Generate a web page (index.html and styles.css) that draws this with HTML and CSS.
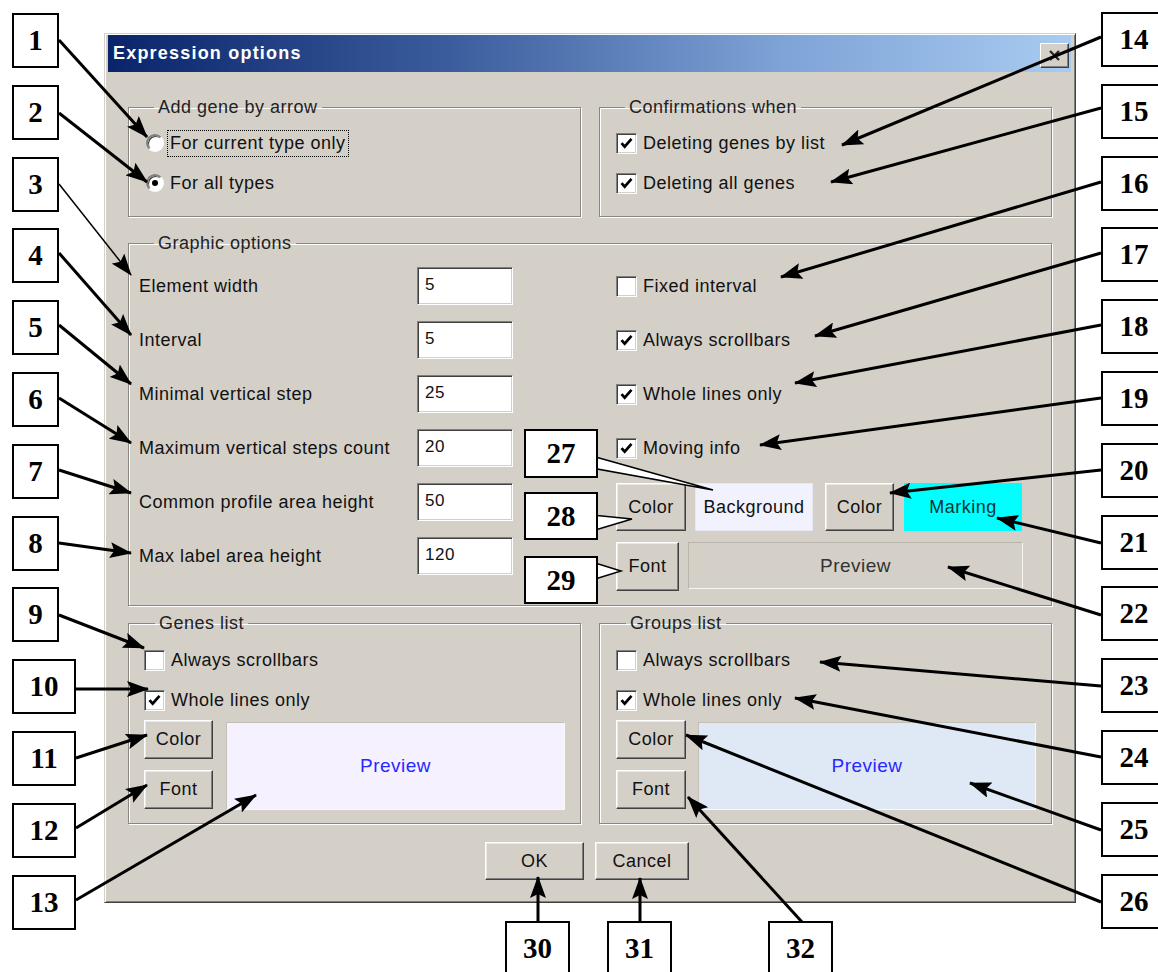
FILE: index.html
```html
<!DOCTYPE html>
<html>
<head>
<meta charset="utf-8">
<title>Expression options</title>
<link rel="stylesheet" href="styles.css">
</head>
<body>
<div class="figure">
  <div class="col-left">
    <div class="num">1</div>
    <div class="num">2</div>
    <div class="num">3</div>
    <div class="num">4</div>
    <div class="num">5</div>
    <div class="num">6</div>
    <div class="num">7</div>
    <div class="num">8</div>
    <div class="num">9</div>
    <div class="num wide">10</div>
    <div class="num wide">11</div>
    <div class="num wide">12</div>
    <div class="num wide">13</div>
  </div>

  <div class="center">
    <div class="dialog">
      <div class="titlebar">
        <span class="title">Expression options</span>
        <span class="closebtn"><svg width="13" height="11" viewBox="0 0 13 11"><path d="M2 1 L11 10 M11 1 L2 10" stroke="#222" stroke-width="2.2"/></svg></span>
      </div>
      <div class="client">
        <div class="pair top-pair">
          <fieldset class="grp g-add">
            <legend>Add gene by arrow</legend>
            <div class="opt"><span class="radio"></span><span class="lbl focus">For current type only</span></div>
            <div class="opt"><span class="radio on"></span><span class="lbl">For all types</span></div>
          </fieldset>
          <fieldset class="grp g-conf">
            <legend>Confirmations when</legend>
            <div class="opt"><span class="cb on"><svg viewBox="0 0 21 21"><path d="M5 10 L8.5 14 L16 5.5"/></svg></span><span class="lbl">Deleting genes by list</span></div>
            <div class="opt"><span class="cb on"><svg viewBox="0 0 21 21"><path d="M5 10 L8.5 14 L16 5.5"/></svg></span><span class="lbl">Deleting all genes</span></div>
          </fieldset>
        </div>

        <fieldset class="grp g-graphic">
          <legend>Graphic options</legend>
          <div class="graphic-grid">
            <div class="fields">
              <div class="field"><span class="flabel">Element width</span><span class="edit">5</span></div>
              <div class="field"><span class="flabel">Interval</span><span class="edit">5</span></div>
              <div class="field"><span class="flabel">Minimal vertical step</span><span class="edit">25</span></div>
              <div class="field"><span class="flabel">Maximum vertical steps count</span><span class="edit">20</span></div>
              <div class="field"><span class="flabel">Common profile area height</span><span class="edit">50</span></div>
              <div class="field"><span class="flabel">Max label area height</span><span class="edit">120</span></div>
            </div>
            <div class="gright">
              <div class="gopt"><span class="cb"></span><span class="lbl">Fixed interval</span></div>
              <div class="gopt"><span class="cb on"><svg viewBox="0 0 21 21"><path d="M5 10 L8.5 14 L16 5.5"/></svg></span><span class="lbl">Always scrollbars</span></div>
              <div class="gopt"><span class="cb on"><svg viewBox="0 0 21 21"><path d="M5 10 L8.5 14 L16 5.5"/></svg></span><span class="lbl">Whole lines only</span></div>
              <div class="gopt"><span class="cb on"><svg viewBox="0 0 21 21"><path d="M5 10 L8.5 14 L16 5.5"/></svg></span><span class="lbl">Moving info</span></div>
              <div class="color-row">
                <span class="btn btn-c1">Color</span>
                <span class="swatch sw-bg">Background</span>
                <span class="btn btn-c2">Color</span>
                <span class="swatch sw-mark">Marking</span>
              </div>
              <div class="font-row">
                <span class="btn btn-f">Font</span>
                <span class="gpreview">Preview</span>
              </div>
            </div>
          </div>
        </fieldset>

        <div class="pair bottom-pair">
          <fieldset class="grp g-list g-genes">
            <legend>Genes list</legend>
            <div class="opt"><span class="cb"></span><span class="lbl">Always scrollbars</span></div>
            <div class="opt"><span class="cb on"><svg viewBox="0 0 21 21"><path d="M5 10 L8.5 14 L16 5.5"/></svg></span><span class="lbl">Whole lines only</span></div>
            <div class="list-lower">
              <div class="btncol">
                <span class="btn btn-l">Color</span>
                <span class="btn btn-l">Font</span>
              </div>
              <div class="lpreview pv-genes">Preview</div>
            </div>
          </fieldset>
          <fieldset class="grp g-list g-groups">
            <legend>Groups list</legend>
            <div class="opt"><span class="cb"></span><span class="lbl">Always scrollbars</span></div>
            <div class="opt"><span class="cb on"><svg viewBox="0 0 21 21"><path d="M5 10 L8.5 14 L16 5.5"/></svg></span><span class="lbl">Whole lines only</span></div>
            <div class="list-lower">
              <div class="btncol">
                <span class="btn btn-l">Color</span>
                <span class="btn btn-l">Font</span>
              </div>
              <div class="lpreview pv-groups">Preview</div>
            </div>
          </fieldset>
        </div>

        <div class="actions">
          <span class="btn btn-ok">OK</span>
          <span class="btn btn-cancel">Cancel</span>
        </div>
      </div>
    </div>
    <div class="bottom-nums">
      <div class="num n30">30</div>
      <div class="num n31">31</div>
      <div class="num n32">32</div>
    </div>
  </div>

  <div class="col-right">
    <div class="num">14</div>
    <div class="num">15</div>
    <div class="num">16</div>
    <div class="num">17</div>
    <div class="num">18</div>
    <div class="num">19</div>
    <div class="num">20</div>
    <div class="num">21</div>
    <div class="num">22</div>
    <div class="num">23</div>
    <div class="num">24</div>
    <div class="num">25</div>
    <div class="num">26</div>
  </div>

  <svg class="arrows" width="1158" height="972" viewBox="0 0 1158 972">
    <defs>
      <marker id="ah" viewBox="0 0 22 16" refX="21" refY="8" markerWidth="22" markerHeight="16" markerUnits="userSpaceOnUse" orient="auto">
        <path d="M0 0 L22 8 L0 16 L4 8 Z" fill="#000"/>
      </marker>
    </defs>
    <g stroke="#000" stroke-width="3" fill="none" marker-end="url(#ah)">
      <line x1="59" y1="40" x2="147" y2="137"/>
      <line x1="59" y1="113" x2="147" y2="182"/>
      <line x1="59" y1="184" x2="131" y2="275" stroke-width="1.5"/>
      <line x1="59" y1="253" x2="131" y2="335"/>
      <line x1="59" y1="325" x2="131" y2="384"/>
      <line x1="59" y1="398" x2="131" y2="443"/>
      <line x1="59" y1="470" x2="131" y2="493"/>
      <line x1="59" y1="543" x2="131" y2="553"/>
      <line x1="59" y1="615" x2="144" y2="648"/>
      <line x1="76" y1="689" x2="148" y2="689"/>
      <line x1="76" y1="758" x2="147" y2="735"/>
      <line x1="76" y1="828" x2="147" y2="785"/>
      <line x1="76" y1="900" x2="256" y2="795"/>
      <line x1="1101" y1="37" x2="842" y2="145"/>
      <line x1="1101" y1="108" x2="831" y2="182"/>
      <line x1="1101" y1="182" x2="781" y2="277"/>
      <line x1="1101" y1="253" x2="815" y2="336"/>
      <line x1="1101" y1="325" x2="795" y2="383"/>
      <line x1="1101" y1="398" x2="760" y2="445"/>
      <line x1="1101" y1="470" x2="890" y2="493"/>
      <line x1="1101" y1="543" x2="997" y2="518"/>
      <line x1="1101" y1="615" x2="948" y2="567"/>
      <line x1="1101" y1="686" x2="820" y2="662"/>
      <line x1="1101" y1="757" x2="795" y2="698"/>
      <line x1="1101" y1="830" x2="970" y2="783"/>
      <line x1="1101" y1="902" x2="686" y2="735"/>
      <line x1="538" y1="921" x2="538" y2="877"/>
      <line x1="640" y1="921" x2="640" y2="878"/>
      <line x1="802" y1="922" x2="688" y2="797"/>
    </g>
    <g fill="#fff" stroke="#000" stroke-width="1.5" stroke-linejoin="miter">
      <polygon points="592,456 713,490 592,468"/>
      <polygon points="592,515 632,519 592,531"/>
      <polygon points="592,562 621,571 592,580"/>
    </g>
  </svg>

  <div class="num tipnum n27">27</div>
  <div class="num tipnum n28">28</div>
  <div class="num tipnum n29">29</div>
</div>
</body>
</html>
```

FILE: styles.css
```css
* { box-sizing: border-box; }
html, body { margin: 0; padding: 0; background: #fff; }
body {
  width: 1158px;
  height: 972px;
  overflow: hidden;
  font-family: "Liberation Sans", Arial, sans-serif;
  font-size: 18px;
  letter-spacing: 0.5px;
  color: #111;
}

.figure {
  position: relative;
  display: flex;
  width: 1158px;
  height: 972px;
}

/* callout number boxes */
.num {
  height: 55px;
  border: 2px solid #000;
  background: #fff;
  font-family: "Liberation Serif", "Times New Roman", serif;
  font-weight: bold;
  font-size: 29px;
  letter-spacing: 0;
  color: #000;
  display: flex;
  align-items: center;
  justify-content: center;
  flex: none;
}

.col-left {
  width: 104px;
  flex: none;
  padding: 13px 0 0 12px;
  display: flex;
  flex-direction: column;
  gap: 16.8px;
}
.col-left .num { width: 47px; }
.col-left .num.wide { width: 64px; }

.col-right {
  flex: none;
  width: 80px;
  margin-left: 25px;
  padding-top: 12px;
  display: flex;
  flex-direction: column;
  gap: 16.8px;
}
.col-right .num { width: 66px; }

.center {
  width: 972px;
  flex: none;
  padding-top: 33px;
}

.bottom-nums {
  display: flex;
  margin-top: 18px;
  padding-left: 401px;
}
.bottom-nums .num { width: 65px; height: 62px; padding-bottom: 8px; }
.n31 { margin-left: 37px; }
.n32 { margin-left: 96px; }

.tipnum {
  position: absolute;
  left: 524px;
  width: 74px;
  height: 48px;
}
.n27 { top: 429px; height: 49px; }
.n28 { top: 492px; }
.n29 { top: 556px; }

.arrows {
  position: absolute;
  left: 0;
  top: 0;
  pointer-events: none;
}

/* dialog window */
.dialog {
  height: 870px;
  background: #d4d0c8;
  border: 1px solid;
  border-color: #d4d0c8 #404040 #404040 #d4d0c8;
  box-shadow: inset 1px 1px #fff, inset -1px -1px #808080;
  padding: 1px 4px 0 3px;
  display: flex;
  flex-direction: column;
}

.titlebar {
  height: 37px;
  flex: none;
  display: flex;
  align-items: center;
  padding-left: 5px;
  background: linear-gradient(to right, #0a246a 0%, #3a5c9c 35%, #7ea3d6 70%, #a8cbf1 100%);
}
.title {
  color: #fff;
  font-weight: bold;
  font-size: 18px;
  letter-spacing: 1.2px;
}
.closebtn {
  margin-left: auto;
  margin-right: 2px;
  margin-top: 4px;
  width: 29px;
  height: 25px;
  background: #d4d0c8;
  border: 1px solid;
  border-color: #fff #404040 #404040 #fff;
  box-shadow: inset -1px -1px #808080;
  display: flex;
  align-items: center;
  justify-content: center;
}

.client {
  padding: 0 19px 0 20px;
  display: flex;
  flex-direction: column;
}

.pair {
  display: grid;
  grid-template-columns: 1fr 1fr;
  column-gap: 18px;
}
.top-pair { margin-top: 25px; }
.bottom-pair { margin-top: 7px; }

.grp {
  margin: 0;
  padding: 0;
  min-width: 0;
  border: 1px solid #8a8780;
  box-shadow: inset 1px 1px #fff, 1px 1px #fff;
}
.grp legend {
  padding: 0 4px;
  line-height: 21px;
  font-size: 18px;
  color: #222;
}

.g-add { height: 120px; padding: 5px 0 0 17px; }
.g-add legend { margin-left: 8px; }
.g-conf { height: 120px; padding: 5px 0 0 16px; }
.g-conf legend { margin-left: 9px; }

.opt {
  height: 40px;
  display: flex;
  align-items: center;
}
.lbl { margin-left: 6px; }

.focus {
  outline: 1px dotted #000;
  outline-offset: 0;
  padding: 2px 2px;
  margin-left: 4px;
}

.radio {
  width: 18px;
  height: 18px;
  flex: none;
  border-radius: 50%;
  border: 2px solid;
  border-color: #808080 #fff #fff #808080;
  background: #fff;
  box-shadow: inset 1px 1px #404040;
  display: flex;
  align-items: center;
  justify-content: center;
}
.radio.on::after {
  content: "";
  width: 6px;
  height: 6px;
  border-radius: 50%;
  background: #000;
}

.cb {
  width: 21px;
  height: 21px;
  flex: none;
  background: #fff;
  border: 1px solid;
  border-color: #808080 #fff #fff #808080;
  box-shadow: inset 1px 1px #404040, inset -1px -1px #d4d0c8;
  display: flex;
}
.cb svg {
  width: 19px;
  height: 19px;
  fill: none;
  stroke: #000;
  stroke-width: 3;
}

/* graphic options */
.g-graphic {
  margin-top: 16px;
  padding: 5px 0 14px 10px;
}
.g-graphic legend { margin-left: 15px; }
.graphic-grid {
  display: grid;
  grid-template-columns: 374px 1fr;
  column-gap: 103px;
  align-items: start;
}
.field {
  height: 54px;
  display: flex;
  align-items: center;
}
.flabel { flex: 1; }
.edit {
  width: 96px;
  height: 38px;
  flex: none;
  background: #fff;
  border: 1px solid;
  border-color: #808080 #fff #fff #808080;
  box-shadow: inset 1px 1px #404040, inset -1px -1px #d4d0c8;
  padding: 7px 0 0 7px;
  font-size: 17px;
  color: #111;
}
.gopt {
  height: 54px;
  display: flex;
  align-items: center;
}

.btn {
  display: flex;
  align-items: center;
  justify-content: center;
  background: #d4d0c8;
  border: 1px solid;
  border-color: #fff #404040 #404040 #fff;
  box-shadow: inset -1px -1px #808080, inset 1px 1px #ece9e2;
  font-size: 18px;
  color: #111;
  flex: none;
}

.color-row {
  margin-top: 8px;
  height: 48px;
  display: flex;
}
.btn-c1 { width: 70px; }
.btn-c2 { width: 69px; margin-left: 12px; }
.swatch {
  width: 118px;
  display: flex;
  align-items: center;
  justify-content: center;
  flex: none;
}
.sw-bg {
  margin-left: 9px;
  background: #f2f1fe;
  border: 1px solid #e8e6f4;
}
.sw-mark {
  margin-left: 10px;
  background: #00ffff;
  color: #073636;
}

.font-row {
  margin-top: 11px;
  height: 49px;
  display: flex;
}
.btn-f { width: 63px; }
.gpreview {
  margin-left: 9px;
  width: 335px;
  height: 47px;
  display: flex;
  align-items: center;
  justify-content: center;
  border: 1px solid;
  border-color: #b9b4aa #f6f5f2 #f6f5f2 #b9b4aa;
  font-size: 19px;
  color: #333;
}

/* lists */
.g-list {
  height: 211px;
  padding: 6px 15px 0 15px;
}
.g-genes legend { margin-left: 11px; }
.g-groups { padding-left: 16px; }
.g-groups legend { margin-left: 10px; }
.list-lower {
  display: flex;
  gap: 13px;
}
.g-groups .list-lower { gap: 12px; }
.btncol {
  display: flex;
  flex-direction: column;
  gap: 11px;
}
.btn-l { width: 69px; height: 39px; }
.g-groups .btn-l { width: 70px; }
.lpreview {
  flex: 1;
  height: 88px;
  margin-top: 2px;
  display: flex;
  align-items: center;
  justify-content: center;
  color: #2828ff;
  font-size: 19px;
  border: 1px solid;
  border-color: #c4bfb4 #faf9f6 #faf9f6 #c4bfb4;
}
.pv-genes { background: #f6f1fe; }
.pv-groups { background: #dfe9f5; }

.actions {
  margin-top: 18px;
  display: flex;
  justify-content: center;
  gap: 11px;
  padding-right: 6px;
}
.btn-ok { width: 99px; height: 38px; }
.btn-cancel { width: 94px; height: 38px; }
```
